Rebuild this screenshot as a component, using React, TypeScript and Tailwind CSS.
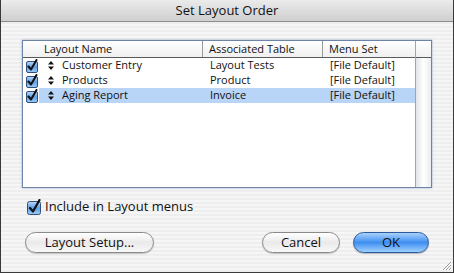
import React from 'react';

const rows = [
  { name: 'Customer Entry', table: 'Layout Tests', menu: '[File Default]', selected: false },
  { name: 'Products', table: 'Product', menu: '[File Default]', selected: false },
  { name: 'Aging Report', table: 'Invoice', menu: '[File Default]', selected: true },
];

function AquaCheck() {
  return (
    <svg width="12" height="14" viewBox="0 0 12 14">
      <defs>
        <linearGradient id="cb" x1="0" y1="0" x2="0" y2="1">
          <stop offset="0" stopColor="#bcd9f7" />
          <stop offset="0.5" stopColor="#5f9fe6" />
          <stop offset="1" stopColor="#9fcdf8" />
        </linearGradient>
      </defs>
      <rect x="0.5" y="2.5" width="11" height="11" rx="1.5" fill="url(#cb)" stroke="#30507a" />
      <path d="M2.5 7.5 L5 10.5 L10.5 1" fill="none" stroke="#111" strokeWidth="2" strokeLinecap="round" strokeLinejoin="round" />
    </svg>
  );
}

function Updown() {
  return (
    <svg width="6" height="9" viewBox="0 0 6 9">
      <path d="M3 0 L6 3.5 L0 3.5 Z M3 9 L6 5.5 L0 5.5 Z" fill="#111" />
    </svg>
  );
}

export default function App() {
  return (
    <div
      className="relative w-[454px] h-[273px] flex flex-col border border-[#3a3a3a] border-t-0 text-[#111] overflow-hidden"
      style={{ fontFamily: '"Open Sans", "DejaVu Sans", sans-serif' }}
    >
      {/* Title bar */}
      <div className="h-[22px] shrink-0 flex items-center justify-center bg-gradient-to-b from-[#ebebeb] to-[#cfcfcf] border-b border-[#8c8c8c] text-[13px]">
        Set Layout Order
      </div>

      {/* Body */}
      <div className="flex-1 flex flex-col px-[21px] pt-[18px] bg-[repeating-linear-gradient(to_bottom,#eeeeee_0px,#eeeeee_2px,#f6f6f6_2px,#f6f6f6_4px)]">
        {/* List */}
        <div className="h-[148px] flex border border-[#6e84a6] bg-white shadow-[0_0_2px_rgba(90,120,170,0.6)]">
          <div className="flex-1 flex flex-col">
            <div className="h-[17px] flex text-[11px] leading-[16px] bg-gradient-to-b from-[#ffffff] to-[#f0f0f0] border-b border-[#5a5a5a]">
              <div className="w-[180px] pl-[21px] border-r border-[#9a9a9a]">Layout Name</div>
              <div className="w-[120px] pl-[6px] border-r border-[#9a9a9a]">Associated Table</div>
              <div className="flex-1 pl-[6px]">Menu Set</div>
            </div>
            {rows.map((r) => (
              <div key={r.name} className="h-[15px] flex items-center text-[11px]">
                <div className="w-[16px] pl-[3px] flex items-center">
                  <AquaCheck />
                </div>
                <div className={`flex-1 h-full flex items-center ${r.selected ? 'bg-[#b8d4f6]' : ''}`}>
                  <div className="w-[164px] flex items-center">
                    <div className="w-[23px] pl-[9px] flex items-center">
                      <Updown />
                    </div>
                    <span>{r.name}</span>
                  </div>
                  <div className="w-[120px] pl-[7px]">{r.table}</div>
                  <div className="flex-1 pl-[7px]">{r.menu}</div>
                </div>
              </div>
            ))}
          </div>
          {/* Scroll track */}
          <div className="w-[16px] flex flex-col border-l border-[#9aa6b8]">
            <div className="h-[17px] border-b border-[#5a5a5a] bg-gradient-to-b from-[#ffffff] to-[#f0f0f0]" />
            <div className="flex-1 bg-gradient-to-r from-[#e2e6ea] via-[#ffffff] to-[#e8ecf0]" />
          </div>
        </div>

        {/* Include checkbox */}
        <div className="mt-[9px] flex items-center gap-[4px] text-[13px] pl-[5px]">
          <svg width="14" height="16" viewBox="0 0 14 16">
            <defs>
              <linearGradient id="cb2" x1="0" y1="0" x2="0" y2="1">
                <stop offset="0" stopColor="#bcd9f7" />
                <stop offset="0.5" stopColor="#5f9fe6" />
                <stop offset="1" stopColor="#9fcdf8" />
              </linearGradient>
            </defs>
            <rect x="0.5" y="2.5" width="13" height="13" rx="2" fill="url(#cb2)" stroke="#30507a" />
            <path d="M3 9 L6 12.5 L12.5 1" fill="none" stroke="#111" strokeWidth="2.2" strokeLinecap="round" strokeLinejoin="round" />
          </svg>
          <span>Include in Layout menus</span>
        </div>

        {/* Buttons */}
        <div className="mt-[15px] flex items-center text-[13px]">
          <button className="ml-[3px] w-[129px] h-[21px] rounded-full border border-[#8a8a8a] bg-gradient-to-b from-[#ffffff] via-[#eaeaea] to-[#f8f8f8] shadow-[0_1px_1px_rgba(0,0,0,0.2)]">
            Layout Setup...
          </button>
          <div className="flex-1" />
          <button className="w-[78px] h-[21px] rounded-full border border-[#8a8a8a] bg-gradient-to-b from-[#ffffff] via-[#eaeaea] to-[#f8f8f8] shadow-[0_1px_1px_rgba(0,0,0,0.2)]">
            Cancel
          </button>
          <button className="ml-[13px] mr-[3px] w-[76px] h-[21px] rounded-full border border-[#2b5a9c] bg-gradient-to-b from-[#a8d0fb] via-[#3d8ef0] to-[#9ed0fd] shadow-[0_1px_1px_rgba(0,0,0,0.25)]">
            OK
          </button>
        </div>
      </div>

      {/* Resize grip */}
      <svg className="absolute right-[1px] bottom-[1px]" width="12" height="12" viewBox="0 0 12 12">
        <path d="M11 3 L3 11 M11 6 L6 11 M11 9 L9 11" stroke="#9a9a9a" strokeWidth="1" />
        <path d="M11 4 L4 11 M11 7 L7 11" stroke="#ffffff" strokeWidth="1" />
      </svg>
    </div>
  );
}
